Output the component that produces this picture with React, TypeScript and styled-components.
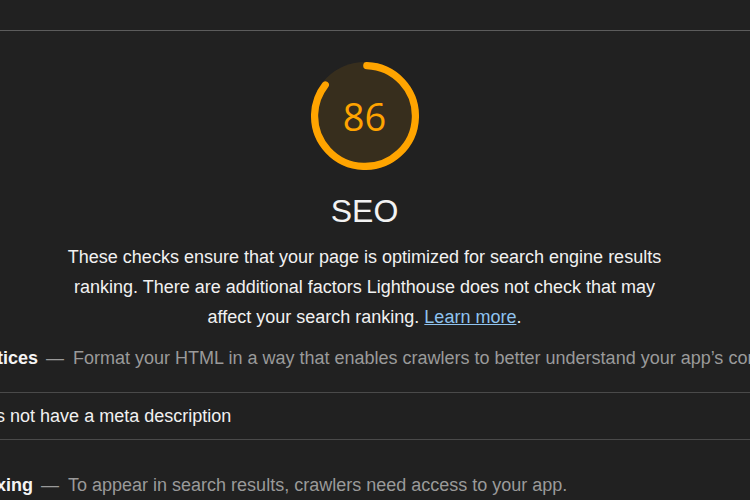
import React from "react";
import styled, { createGlobalStyle } from "styled-components";

const Global = createGlobalStyle`
  html, body {
    margin: 0;
    padding: 0;
    background: #212121;
    overflow: hidden;
  }
  body {
    font-family: "Liberation Sans", Arial, sans-serif;
    color: #f1f1f1;
  }
`;

const Page = styled.div`
  width: 750px;
  height: 500px;
  overflow: hidden;
  background: #212121;
`;

const TopBar = styled.div`
  height: 30px;
  border-bottom: 1px solid #5c5c5c;
`;

/* The report is scrolled horizontally: its column is wider than the viewport */
const Report = styled.div`
  width: 1095px;
  margin-left: -183px;
  padding: 0 24px;
  box-sizing: border-box;
`;

const CategoryHeader = styled.header`
  display: flex;
  flex-direction: column;
  align-items: center;
  padding-top: 31px;
`;

const GaugeWrap = styled.div`
  position: relative;
  width: 108px;
  height: 108px;
`;

const GaugeSvg = styled.svg`
  display: block;
  width: 108px;
  height: 108px;
`;

const GaugeValue = styled.div`
  position: absolute;
  inset: 0;
  display: flex;
  align-items: center;
  justify-content: center;
  font-family: "Open Sans", "Liberation Sans", sans-serif;
  font-size: 38px;
  color: #ffa400;
  padding-bottom: 1px;
`;

const Title = styled.h1`
  margin: 23px 0 0;
  font-size: 32px;
  line-height: 36px;
  font-weight: 400;
  color: #f2f2f2;
`;

const Description = styled.p`
  margin: 13px 0 0;
  width: 620px;
  text-align: center;
  font-size: 18px;
  line-height: 30px;
  color: #f1f1f1;
`;

const Link = styled.a`
  color: #8fc3ef;
  text-decoration: underline;
`;

const GroupHeader = styled.div<{ $top: number }>`
  margin-top: ${(p) => p.$top}px;
  font-size: 18px;
  line-height: 24px;
  white-space: nowrap;
`;

const GroupTitle = styled.span`
  font-weight: 700;
  color: #f4f4f4;
`;

const Dash = styled.span`
  color: #9a9a9a;
  margin: 0 9px 0 8px;
`;

const GroupDesc = styled.span`
  color: #9a9a9a;
`;

const AuditList = styled.div`
  margin-top: 22px;
  border-top: 1px solid #4a4a4a;
`;

const AuditRow = styled.div`
  display: flex;
  align-items: center;
  gap: 24px;
  height: 46px;
  border-bottom: 1px solid #4a4a4a;
`;

const AuditTitle = styled.span`
  font-size: 18px;
  color: #f1f1f1;
  white-space: nowrap;
`;

const FailIcon = () => (
  <svg width="14" height="14" viewBox="0 0 14 14">
    <polygon points="7,1 13,13 1,13" fill="#ff4e42" />
  </svg>
);

const R = 56;
const C = 2 * Math.PI * R;
const score = 0.86;
const arcLen = score * C - 4;
const rot = -90 + ((0.25 * 8) / C) * 360;

export default function App() {
  return (
    <Page>
      <Global />
      <TopBar />
      <Report>
        <CategoryHeader>
          <GaugeWrap>
            <GaugeSvg viewBox="0 0 120 120">
              <circle cx="60" cy="60" r="60" fill="rgba(255,164,0,0.1)" />
              <circle
                cx="60"
                cy="60"
                r={R}
                fill="none"
                stroke="#ffa400"
                strokeWidth="8"
                strokeLinecap="round"
                strokeDasharray={`${arcLen} ${C}`}
                transform={`rotate(${rot} 60 60)`}
              />
            </GaugeSvg>
            <GaugeValue>86</GaugeValue>
          </GaugeWrap>
          <Title>SEO</Title>
          <Description>
            These checks ensure that your page is optimized for search engine results
            ranking. There are additional factors Lighthouse does not check that may
            affect your search ranking. <Link href="#">Learn more</Link>.
          </Description>
        </CategoryHeader>

        <GroupHeader $top={14}>
          <GroupTitle>Content Best Practices</GroupTitle>
          <Dash>—</Dash>
          <GroupDesc>
            Format your HTML in a way that enables crawlers to better understand your
            app’s content.
          </GroupDesc>
        </GroupHeader>

        <AuditList>
          <AuditRow>
            <FailIcon />
            <AuditTitle>Document does not have a meta description</AuditTitle>
          </AuditRow>
        </AuditList>

        <GroupHeader $top={33}>
          <GroupTitle>Crawling and Indexing</GroupTitle>
          <Dash>—</Dash>
          <GroupDesc>To appear in search results, crawlers need access to your app.</GroupDesc>
        </GroupHeader>
      </Report>
    </Page>
  );
}
